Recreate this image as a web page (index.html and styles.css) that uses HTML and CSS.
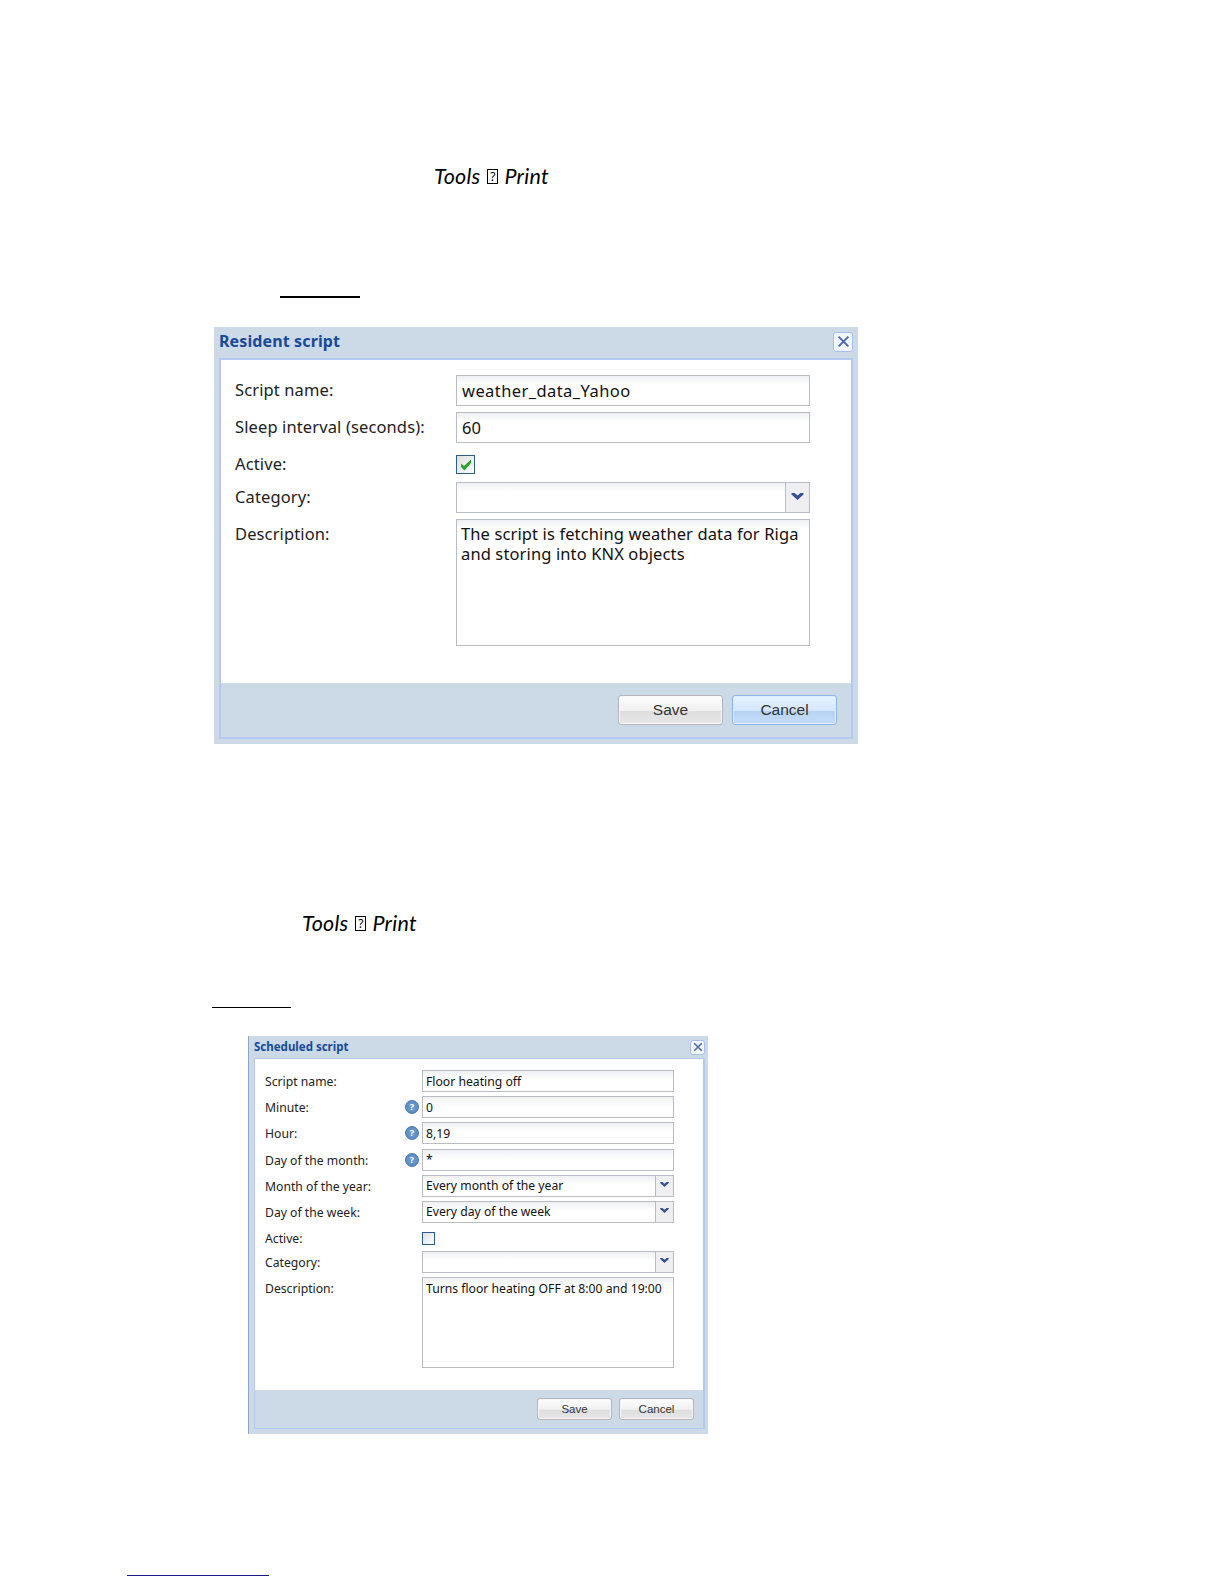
FILE: index.html
```
<!DOCTYPE html>
<html lang="en">
<head>
    <meta charset="UTF-8">
    <meta name="viewport" content="width=device-width, initial-scale=1.0">
    <title>Scripts</title>
    <link rel="stylesheet" href="styles.css">
</head>
<body>
    <main class="page">
        <p class="menu-path">Tools <span class="glyph">?</span> Print</p>
        <div class="rule rule-first"></div>

        <section class="dialog resident">
            <header class="dialog-header">
                <h2>Resident script</h2>
                <button type="button" class="close" aria-label="Close">
                    <svg viewBox="0 0 12 12"><path d="M1.5 1.5L10.5 10.5M10.5 1.5L1.5 10.5"/></svg>
                </button>
            </header>
            <div class="dialog-inner">
                <form class="dialog-body">
                    <div class="row">
                        <span class="label">Script name:</span>
                        <div class="field field-name"><span>weather_data_Yahoo</span></div>
                    </div>
                    <div class="row">
                        <span class="label">Sleep interval (seconds):</span>
                        <div class="field"><span>60</span></div>
                    </div>
                    <div class="row row-check">
                        <span class="label">Active:</span>
                        <div class="checkbox">
                            <svg viewBox="0 0 12 12"><path d="M1 4.5L4 7L11 0.5V4L4.5 11.5L1 8Z"/></svg>
                        </div>
                    </div>
                    <div class="row">
                        <span class="label">Category:</span>
                        <div class="field select"><span></span>
                            <div class="trigger"><svg viewBox="0 0 12 7"><path d="M0 0H3L6 2.6L9 0H12V1.5L6 7L0 1.5Z"/></svg></div>
                        </div>
                    </div>
                    <div class="row">
                        <span class="label">Description:</span>
                        <div class="field area">The script is fetching weather data for Riga<br>and storing into KNX objects</div>
                    </div>
                </form>
                <footer class="dialog-footer">
                    <button type="button" class="btn">Save</button>
                    <button type="button" class="btn btn-focus">Cancel</button>
                </footer>
            </div>
        </section>

        <p class="menu-path menu-path-second">Tools <span class="glyph">?</span> Print</p>
        <div class="rule rule-second"></div>

        <section class="dialog scheduled">
            <header class="dialog-header">
                <h2>Scheduled script</h2>
                <button type="button" class="close" aria-label="Close">
                    <svg viewBox="0 0 12 12"><path d="M1.5 1.5L10.5 10.5M10.5 1.5L1.5 10.5"/></svg>
                </button>
            </header>
            <div class="dialog-inner">
                <form class="dialog-body">
                    <div class="row">
                        <span class="label">Script name:</span>
                        <div class="field"><span>Floor heating off</span></div>
                    </div>
                    <div class="row">
                        <span class="label">Minute:</span>
                        <span class="help">?</span>
                        <div class="field"><span>0</span></div>
                    </div>
                    <div class="row">
                        <span class="label">Hour:</span>
                        <span class="help">?</span>
                        <div class="field"><span>8,19</span></div>
                    </div>
                    <div class="row">
                        <span class="label">Day of the month:</span>
                        <span class="help">?</span>
                        <div class="field"><span>*</span></div>
                    </div>
                    <div class="row">
                        <span class="label">Month of the year:</span>
                        <div class="field select"><span>Every month of the year</span>
                            <div class="trigger"><svg viewBox="0 0 12 7"><path d="M0 0H3L6 2.6L9 0H12V1.5L6 7L0 1.5Z"/></svg></div>
                        </div>
                    </div>
                    <div class="row">
                        <span class="label">Day of the week:</span>
                        <div class="field select"><span>Every day of the week</span>
                            <div class="trigger"><svg viewBox="0 0 12 7"><path d="M0 0H3L6 2.6L9 0H12V1.5L6 7L0 1.5Z"/></svg></div>
                        </div>
                    </div>
                    <div class="row row-check">
                        <span class="label">Active:</span>
                        <div class="checkbox"></div>
                    </div>
                    <div class="row">
                        <span class="label">Category:</span>
                        <div class="field select"><span></span>
                            <div class="trigger"><svg viewBox="0 0 12 7"><path d="M0 0H3L6 2.6L9 0H12V1.5L6 7L0 1.5Z"/></svg></div>
                        </div>
                    </div>
                    <div class="row">
                        <span class="label">Description:</span>
                        <div class="field area">Turns floor heating OFF at 8:00 and 19:00</div>
                    </div>
                </form>
                <footer class="dialog-footer">
                    <button type="button" class="btn">Save</button>
                    <button type="button" class="btn">Cancel</button>
                </footer>
            </div>
        </section>

        <div class="rule rule-link"></div>
    </main>
</body>
</html>
```
FILE: styles.css
```
* {
    box-sizing: border-box;
}

body {
    margin: 0;
    background: #fff;
    color: #222;
    font-family: "Noto Sans", "Open Sans", sans-serif;
}

.page {
    width: 1224px;
    height: 1584px;
    padding-top: 160px;
    overflow: hidden;
}

/* text between the dialogs */
.menu-path {
    display: flex;
    align-items: center;
    height: 32px;
    margin: 0 0 0 434px;
    font: italic 21.5px/32px Lato, sans-serif;
    letter-spacing: 0.25px;
    color: #000;
}

.menu-path-second {
    margin: 163px 0 0 302px;
}

.glyph {
    width: 11px;
    height: 15px;
    margin: 0 6px 0 7px;
    border: 1px solid #000;
    font: 12px/13px "Noto Sans", sans-serif;
    letter-spacing: 0;
    text-align: center;
}

.rule {
    height: 1px;
    background: #000;
}

.rule-first {
    width: 80px;
    height: 2px;
    margin: 104px 0 29px 280px;
}

.rule-second {
    width: 79px;
    margin: 68px 0 28px 212px;
}

.rule-link {
    width: 142px;
    margin: 141px 0 0 127px;
    background: #1a1a80;
}

/* dialog window */
.dialog {
    display: flex;
    flex-direction: column;
    background: #ccd9e6;
}

.dialog-header {
    display: flex;
    justify-content: space-between;
    align-items: center;
}

.dialog-header h2 {
    margin: 0;
    color: #174a98;
    white-space: nowrap;
}

.close {
    display: flex;
    align-items: center;
    justify-content: center;
    padding: 0;
    border: 1px solid #a5c0ec;
    border-radius: 3px;
    background: #f2f7ff;
}

.close svg {
    fill: none;
    stroke: #4a69b0;
    stroke-width: 1.8;
}

.dialog-inner {
    display: flex;
    flex-direction: column;
    flex: 1;
    border: 2px solid #b5c9ee;
}

.dialog-body {
    flex: 1;
    background: #fff;
}

.row {
    display: flex;
    align-items: flex-start;
}

.label {
    white-space: nowrap;
}

.field {
    display: flex;
    align-items: center;
    border: 1px solid #b9bcc4;
    background: linear-gradient(#eef0f2, #fff 9px);
    color: #111;
    white-space: nowrap;
}

.field.area {
    display: block;
}

.select {
    justify-content: space-between;
}

.trigger {
    display: flex;
    align-items: center;
    justify-content: center;
    align-self: stretch;
    border-left: 1px solid #b9bcc4;
    background: #efeff1;
}

.trigger svg {
    margin-bottom: 2px;
    fill: #35508f;
}

.checkbox {
    display: flex;
    align-items: center;
    justify-content: center;
    border: 1px solid #2c5c8c;
    background: linear-gradient(135deg, #dcdfe3, #fff);
}

.checkbox svg {
    width: 12px;
    height: 12px;
    fill: #27a52a;
}

.help {
    border: 1px solid #4876ac;
    border-radius: 50%;
    background: radial-gradient(#6e9fd0, #5286c2);
    color: #fff;
    text-align: center;
}

.dialog-footer {
    display: flex;
    justify-content: flex-end;
    background: #ccd9e6;
}

.btn {
    padding: 0;
    border: 1px solid #b4b6ba;
    border-radius: 3px;
    background: linear-gradient(#fdfdfd, #f0f0f0 52%, #dededf 54%, #e6e6e6);
    box-shadow: inset 0 0 0 1px #f7f7f7;
    color: #333;
    font-family: "Liberation Sans", Arial, sans-serif;
}

.btn-focus {
    border-color: #91b5e8;
    background: linear-gradient(#e6f2ff, #d4e7fd 52%, #b8d3f2 54%, #c5ddfa);
    box-shadow: inset 0 0 0 1px #dcebff;
}

/* resident script window */
.resident {
    width: 644px;
    height: 417px;
    margin-left: 214px;
    padding: 0 5px 5px;
    font-size: 16.5px;
    letter-spacing: 0.12px;
}

.resident .dialog-header {
    height: 31px;
}

.resident h2 {
    padding-bottom: 3px;
    font-size: 16px;
    line-height: 28px;
}

.resident .close {
    width: 20px;
    height: 20px;
    margin-bottom: 2px;
}

.resident .close svg {
    width: 13px;
    height: 13px;
}

.resident .dialog-body {
    padding: 15px 0 0 14px;
}

.resident .row {
    height: 31px;
    margin-bottom: 6px;
}

.resident .row-check {
    height: 20px;
    margin: 12px 0 7px;
}

.resident .label {
    width: 221px;
    line-height: 30px;
}

.resident .row-check .label {
    line-height: 17px;
}

.resident .field {
    width: 354px;
    height: 31px;
    padding-left: 5px;
}

.resident .field-name {
    letter-spacing: 0.42px;
}

.resident .area {
    height: 127px;
    padding: 4px 0 0 4px;
    line-height: 20px;
}

.resident .trigger {
    width: 24px;
}

.resident .trigger svg {
    width: 13px;
    height: 7px;
}

.resident .checkbox {
    width: 19px;
    height: 19px;
}

.resident .dialog-footer {
    height: 54px;
    padding: 12px 14px 0 0;
    gap: 9px;
}

.resident .btn {
    width: 105px;
    height: 30px;
    font-size: 15.5px;
}

/* scheduled script window */
.scheduled {
    width: 460px;
    height: 398px;
    margin-left: 248px;
    padding: 0 3px 5px 5px;
    border-left: 1px solid #8ba6c6;
    font-size: 12.2px;
}

.scheduled .dialog-header {
    height: 22px;
}

.scheduled h2 {
    padding-bottom: 1px;
    font-size: 11.5px;
    line-height: 20px;
}

.scheduled .close {
    width: 15px;
    height: 15px;
}

.scheduled .close svg {
    width: 10px;
    height: 10px;
}

.scheduled .dialog-inner {
    border-width: 1px 2px 1px 1px;
}

.scheduled .dialog-body {
    padding: 11px 0 0 10px;
}

.scheduled .row {
    height: 22px;
    margin-bottom: 4.2px;
}

.scheduled .row-check {
    height: 14px;
    margin: 9px 0 5px;
}

.scheduled .label {
    width: 157px;
    line-height: 23px;
}

.scheduled .row-check .label {
    line-height: 13px;
}

.scheduled .help {
    width: 14px;
    height: 14px;
    margin: 4px 3px 0 -17px;
    font: bold 9px/12px "Noto Sans", sans-serif;
}

.scheduled .field {
    width: 252px;
    height: 22px;
    padding-left: 3px;
}

.scheduled .area {
    height: 91px;
    padding-top: 2px;
    line-height: 17px;
}

.scheduled .trigger {
    width: 18px;
}

.scheduled .trigger svg {
    width: 9px;
    height: 5px;
}

.scheduled .checkbox {
    width: 13px;
    height: 13px;
}

.scheduled .dialog-footer {
    height: 38px;
    padding: 8px 9px 0 0;
    gap: 7px;
}

.scheduled .btn {
    width: 75px;
    height: 22px;
    font-size: 11.5px;
}
```
